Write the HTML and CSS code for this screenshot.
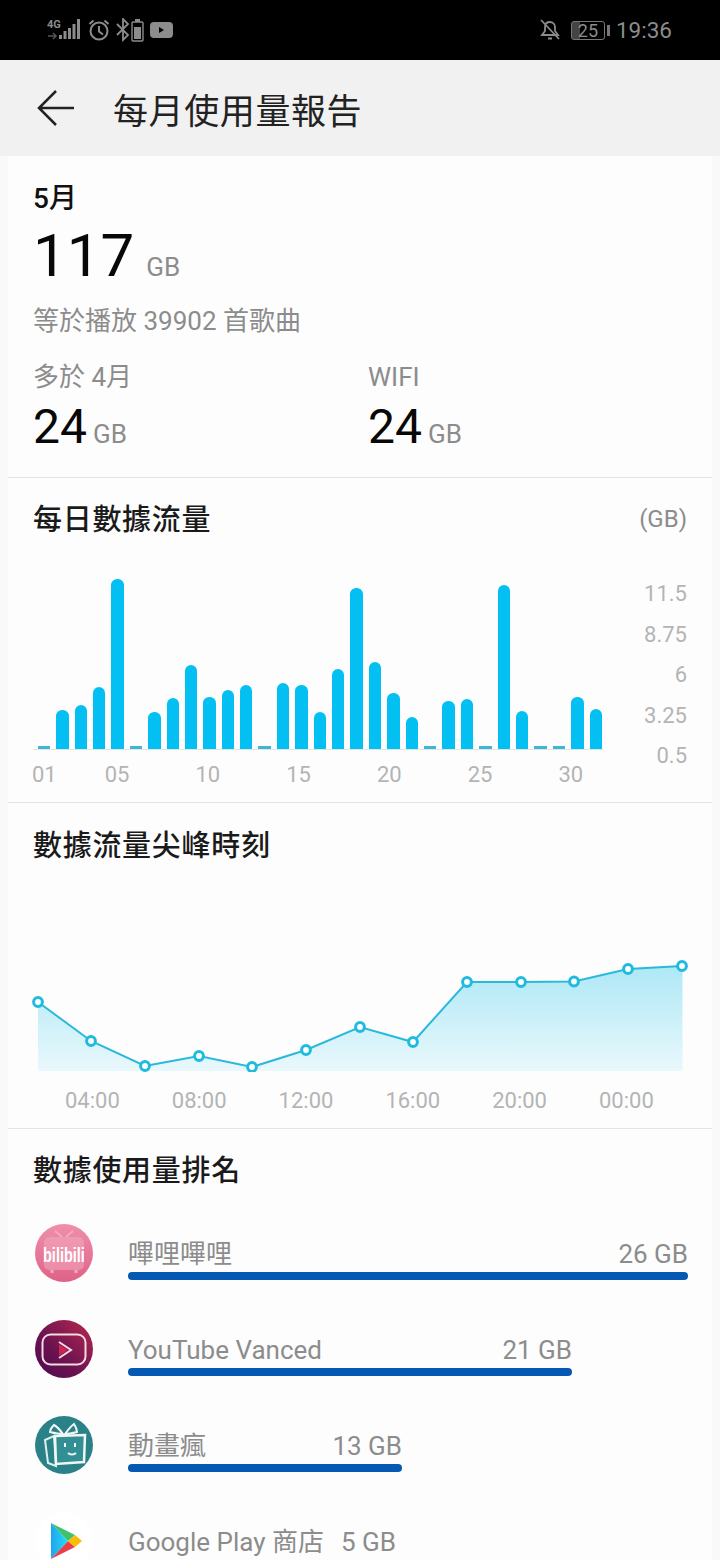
FILE: index.html
```html
<!DOCTYPE html>
<html lang="zh-Hant">
<head>
<meta charset="utf-8">
<title>每月使用量報告</title>
<link rel="stylesheet" href="styles.css">
</head>
<body>
<div class="phone">
  <header class="status">
    <div class="status-left">
      <svg class="ic-net" width="36" height="22" viewBox="0 0 36 22">
        <text x="1" y="9" class="net-t">4G</text>
        <path d="M2 17h8M7 14l3 3-3 3" class="net-a"/>
        <rect x="13" y="16" width="3" height="4" fill="#8c8c8c"/>
        <rect x="17.500" y="12" width="3" height="8" fill="#8c8c8c"/>
        <rect x="22" y="9" width="3" height="11" fill="#8c8c8c"/>
        <rect x="26.500" y="5" width="3" height="15" fill="#8c8c8c"/>
        <rect x="31" y="0" width="3" height="20" fill="#8c8c8c"/>
      </svg>
      <svg width="22" height="22" viewBox="0 0 22 22" fill="none" stroke="#8c8c8c" stroke-width="2">
        <circle cx="11" cy="12" r="8.500"/>
        <path d="M11 7v5.500l4 3M1.500 5l4-3.500M20.500 5l-4-3.500"/>
      </svg>
      <svg width="28" height="24" viewBox="0 0 28 24" fill="none" stroke="#8c8c8c" stroke-width="1.800">
        <path d="M1 6l11 11-5 5V1l5 5L1 17"/>
        <rect x="16" y="4" width="11" height="19" rx="1" stroke-width="1.400"/>
        <rect x="18" y="9" width="7" height="12" fill="#8c8c8c" stroke="none"/>
        <rect x="19" y="1" width="5" height="3" fill="#8c8c8c" stroke="none"/>
      </svg>
      <svg width="23" height="16" viewBox="0 0 23 16">
        <rect width="23" height="16" rx="4" fill="#8c8c8c"/>
        <path d="M9 5l5 3-5 3z" fill="#000"/>
      </svg>
    </div>
    <div class="status-right">
      <svg class="bell" width="20" height="22" viewBox="0 0 20 22" fill="none" stroke="#8c8c8c" stroke-width="1.800">
        <path d="M1 1l18 19M5 8c0-3 2-5 5-5 2.500 0 5 2 5 5v4l3 4H2l3-4zM8 19.500h4"/>
      </svg>
      <div class="battery">
        <span class="batt-box"><span class="batt-num">25</span></span>
        <span class="batt-cap"></span>
      </div>
      <span class="clock">19:36</span>
    </div>
  </header>

  <div class="appbar">
    <svg width="40" height="38" viewBox="0 0 40 38" fill="none" stroke="#222" stroke-width="2.500">
      <path d="M38 19H3M20 2L3 19l17 17"/>
    </svg>
    <h1 class="app-title">每月使用量報告</h1>
  </div>

  <main class="card">
    <section class="summary">
      <div class="month">5月</div>
      <div class="total"><span class="total-num">117</span><span class="total-unit">GB</span></div>
      <div class="note">等於播放 39902 首歌曲</div>
      <div class="stats">
        <div class="stat">
          <div class="stat-label">多於 4月</div>
          <div class="stat-value"><span class="stat-num">24</span><span class="stat-unit">GB</span></div>
        </div>
        <div class="stat">
          <div class="stat-label">WIFI</div>
          <div class="stat-value"><span class="stat-num">24</span><span class="stat-unit">GB</span></div>
        </div>
      </div>
    </section>

    <section class="daily">
      <div class="head-row">
        <h2 class="sec-title">每日數據流量</h2>
        <span class="gb-note">(GB)</span>
      </div>
      <div class="bars-wrap">
        <div class="bars-col">
          <div class="bars">
            <i class="bar stub"></i>
            <i class="bar" style="height:39px"></i>
            <i class="bar" style="height:44px"></i>
            <i class="bar" style="height:62px"></i>
            <i class="bar" style="height:170px"></i>
            <i class="bar stub"></i>
            <i class="bar" style="height:37px"></i>
            <i class="bar" style="height:51px"></i>
            <i class="bar" style="height:84px"></i>
            <i class="bar" style="height:52px"></i>
            <i class="bar" style="height:59px"></i>
            <i class="bar" style="height:64px"></i>
            <i class="bar stub"></i>
            <i class="bar" style="height:66px"></i>
            <i class="bar" style="height:64px"></i>
            <i class="bar" style="height:37px"></i>
            <i class="bar" style="height:80px"></i>
            <i class="bar" style="height:161px"></i>
            <i class="bar" style="height:87px"></i>
            <i class="bar" style="height:56px"></i>
            <i class="bar" style="height:32px"></i>
            <i class="bar stub"></i>
            <i class="bar" style="height:48px"></i>
            <i class="bar" style="height:50px"></i>
            <i class="bar stub"></i>
            <i class="bar" style="height:164px"></i>
            <i class="bar" style="height:38px"></i>
            <i class="bar stub"></i>
            <i class="bar stub"></i>
            <i class="bar" style="height:52px"></i>
            <i class="bar" style="height:40px"></i>
          </div>
          <div class="bar-days">
            <span>01</span><span>05</span><span>10</span><span>15</span><span>20</span><span>25</span><span>30</span>
          </div>
        </div>
        <div class="y-axis">
          <span>11.5</span><span>8.75</span><span>6</span><span>3.25</span><span>0.5</span>
        </div>
      </div>
    </section>

    <section class="peak">
      <h2 class="sec-title">數據流量尖峰時刻</h2>
      <svg class="line-chart" width="704" height="209" viewBox="0 0 704 209">
        <defs>
          <linearGradient id="area" x1="0" y1="0" x2="0" y2="1">
            <stop offset="0" stop-color="#aee8f6"/>
            <stop offset="1" stop-color="#e9f8fc"/>
          </linearGradient>
        </defs>
        <path fill="url(#area)" d="M30 139L83 178L137 203L191 193L244 204L298 187L352 164L405 179L459 119L513 119L566 118.500L620 106L674.500 103V208H30Z"/>
        <polyline class="line" points="30,139 83,178 137,203 191,193 244,204 298,187 352,164 405,179 459,119 513,119 566,118.500 620,106 674,103"/>
        <g class="dots">
          <circle cx="30" cy="139" r="4.400"/><circle cx="83" cy="178" r="4.400"/><circle cx="137" cy="203" r="4.400"/><circle cx="191" cy="193" r="4.400"/><circle cx="244" cy="204" r="4.400"/><circle cx="298" cy="187" r="4.400"/><circle cx="352" cy="164" r="4.400"/><circle cx="405" cy="179" r="4.400"/><circle cx="459" cy="119" r="4.400"/><circle cx="513" cy="119" r="4.400"/><circle cx="566" cy="118.500" r="4.400"/><circle cx="620" cy="106" r="4.400"/><circle cx="674" cy="103" r="4.400"/>
        </g>
      </svg>
      <div class="hours">
        <span>04:00</span><span>08:00</span><span>12:00</span><span>16:00</span><span>20:00</span><span>00:00</span>
      </div>
    </section>

    <section class="rank">
      <h2 class="sec-title">數據使用量排名</h2>
      <div class="rows">
        <div class="row">
          <svg class="app-icon" viewBox="0 0 58 58">
            <defs>
              <linearGradient id="bl" x1="0" y1="0" x2="0" y2="1">
                <stop offset="0" stop-color="#ef8fac"/>
                <stop offset="1" stop-color="#df6288"/>
              </linearGradient>
            </defs>
            <circle cx="29" cy="29" r="29" fill="url(#bl)"/>
            <path d="M20 7l7 6M38 7l-7 6" stroke="#f3a9c0" stroke-width="2" fill="none"/>
            <rect x="9" y="13" width="40" height="33" rx="5" fill="#f3a9c0" fill-opacity=".55"/>
            <path d="M17 46v3M41 46v3" stroke="#f3a9c0" stroke-width="3"/>
            <text class="bili-t" transform="translate(8 38) scale(1 1.380)">bilibili</text>
          </svg>
          <div class="usage" style="width:560px">
            <div class="usage-text"><span>嗶哩嗶哩</span><span>26 GB</span></div>
            <div class="usage-bar"></div>
          </div>
        </div>
        <div class="row">
          <svg class="app-icon" viewBox="0 0 58 58">
            <defs>
              <linearGradient id="yt" x1="1" y1="0" x2="0" y2="1">
                <stop offset="0" stop-color="#b8294f"/>
                <stop offset=".6" stop-color="#6a1250"/>
                <stop offset="1" stop-color="#4d0a4d"/>
              </linearGradient>
            </defs>
            <circle cx="29" cy="29" r="29" fill="url(#yt)"/>
            <rect x="7.500" y="14.500" width="43" height="30" rx="8" fill="none" stroke="#f4dbe4" stroke-width="2"/>
            <path d="M24 22l12 8-12 8" fill="none" stroke="#f7dbe4" stroke-width="2"/>
            <path d="M24 24l9 6-9 6z" fill="#c8264f"/>
          </svg>
          <div class="usage" style="width:444px">
            <div class="usage-text"><span>YouTube Vanced</span><span>21 GB</span></div>
            <div class="usage-bar"></div>
          </div>
        </div>
        <div class="row">
          <svg class="app-icon" viewBox="0 0 58 58">
            <circle cx="29" cy="29" r="29" fill="#2a8288"/>
            <path d="M28 18c-3-4-7-8-9-9-2 2-4 5-4 7 4 1 9 2 13 2zM30 18c3-4 6-8 9-10 2 3 3 5 3 8-4 1-8 2-12 2z" fill="none" stroke="#f1f6f6" stroke-width="2"/>
            <path d="M10 24l9-4 2 30-8-3z" fill="none" stroke="#dfeeee" stroke-width="2"/>
            <path d="M20 20l30-1-1 27-28 2z" fill="#328f93" stroke="#f1f6f6" stroke-width="2.500"/>
            <path d="M30 27v4M40 27v4M33 37c2 2 6 2 8 0" fill="none" stroke="#f1f6f6" stroke-width="2"/>
          </svg>
          <div class="usage" style="width:274px">
            <div class="usage-text"><span>動畫瘋</span><span>13 GB</span></div>
            <div class="usage-bar"></div>
          </div>
        </div>
        <div class="row">
          <svg class="app-icon" viewBox="0 0 58 58">
            <defs>
              <linearGradient id="gp" x1="0" y1="0" x2="1" y2="0">
                <stop offset="0" stop-color="#1fa5ee"/>
                <stop offset="1" stop-color="#27dcf5"/>
              </linearGradient>
            </defs>
            <circle cx="29" cy="29" r="29" fill="#fff"/>
            <path d="M16 11v36l17-18z" fill="url(#gp)"/>
            <path d="M16 11l17 18 7-6z" fill="#3fc26b"/>
            <path d="M16 47l17-18 7 6z" fill="#e8404a"/>
            <path d="M33 29l7-6 7 6-7 6z" fill="#fbbc05"/>
          </svg>
          <div class="usage" style="width:117px">
            <div class="usage-text wide"><span>Google Play 商店</span><span>5 GB</span></div>
            <div class="usage-bar"></div>
          </div>
        </div>
      </div>
    </section>
  </main>
</div>
</body>
</html>
```

FILE: styles.css
```css
* { box-sizing: border-box; }
html, body { margin: 0; padding: 0; }
body {
  width: 720px;
  height: 1560px;
  overflow: hidden;
  background: #f9f9f9;
  font-family: Roboto, "Noto Sans CJK TC", sans-serif;
}
.phone { width: 720px; height: 1560px; overflow: hidden; }

.status {
  height: 60px;
  background: #000;
  display: flex;
  justify-content: space-between;
  align-items: center;
  padding: 0 48px 0 46px;
  color: #8c8c8c;
}
.status-left { display: flex; align-items: center; gap: 6px; }
.status-right { display: flex; align-items: center; gap: 6px; }
.bell { margin-right: 5px; }
.net-t { font: 700 11px "Roboto", sans-serif; fill: #8c8c8c; }
.net-a { stroke: #555; stroke-width: 1.5; fill: none; }
.battery { display: flex; align-items: center; gap: 2px; }
.batt-box {
  width: 34px;
  height: 19px;
  border: 1.5px solid #777;
  border-radius: 3px;
  display: flex;
  align-items: center;
  justify-content: center;
  overflow: hidden;
  background: linear-gradient(90deg, #444 0 26%, #000 26%);
}
.batt-num { font-size: 18px; color: #8c8c8c; }
.batt-cap { width: 3px; height: 11px; background: #777; }
.clock { font-size: 22.500px; }

.appbar {
  height: 96px;
  background: #f1f1f1;
  display: flex;
  align-items: center;
  padding-left: 36px;
  gap: 37px;
}
.app-title {
  margin: 0;
  font-size: 35px;
  font-weight: 400;
  letter-spacing: .6px;
  color: #222;
}

.card {
  margin: 0 8px;
  background: #fdfdfd;
}
.summary {
  height: 322px;
  padding: 26px 25px 0;
  border-bottom: 1px solid #e4e4e4;
}
.month { font-size: 28px; line-height: 34px; color: #111; font-weight: 500; }
.total { display: flex; align-items: baseline; height: 70px; margin-top: 5px; }
.total-num { font-size: 60px; line-height: 70px; color: #080808; }
.total-unit { font-size: 26px; color: #8c8c8c; margin-left: 12px; }
.note { font-size: 26px; line-height: 34px; color: #8c8c8c; margin-top: 13px; }
.stats { display: flex; margin-top: 22px; }
.stat { flex: 0 0 335px; }
.stat-label { font-size: 26px; line-height: 34px; color: #8c8c8c; }
.stat-value { display: flex; align-items: baseline; height: 56px; margin-top: 5px; }
.stat-num { font-size: 48px; line-height: 56px; color: #080808; }
.stat-unit { font-size: 26px; color: #8c8c8c; margin-left: 6px; }

.daily {
  height: 325px;
  padding: 24px 25px 0;
  border-bottom: 1px solid #e4e4e4;
}
.head-row { display: flex; justify-content: space-between; align-items: center; }
.sec-title { margin: 0; font-size: 29px; line-height: 36px; font-weight: 500; color: #1a1a1a; letter-spacing: .7px; }
.gb-note { font-size: 24px; color: #8c8c8c; margin-bottom: 2px; }
.bars-wrap { display: flex; justify-content: space-between; margin-top: 23px; }
.bars-col { width: 570px; }
.bars {
  height: 189px;
  width: 570px;
  display: flex;
  align-items: flex-end;
  gap: 6px;
  padding-left: 4.800px;
  border-bottom: 1px solid #e3e3e3;
}
.bar {
  display: block;
  flex: 0 0 12.400px;
  background: #04c0f2;
  border-radius: 6.200px 6.200px 0 0;
}
.bar.stub { height: 3px; border-radius: 0; background: #3fb6d6; }
.bar-days { display: flex; height: 30px; margin: 10px 0 0 -1px; font-size: 22px; line-height: 30px; color: #b4b4b4; }
.bar-days span:nth-child(2) { margin-left: 48px; }
.bar-days span:nth-child(n+3) { margin-left: 66px; }
.y-axis {
  display: flex;
  flex-direction: column;
  align-items: flex-end;
  gap: 10.500px;
  font-size: 22px;
  line-height: 30px;
  color: #b4b4b4;
  padding-top: 18px;
}

.peak {
  height: 326px;
  padding: 25px 0 0;
  border-bottom: 1px solid #e4e4e4;
}
.peak .sec-title { padding-left: 25px; }
.line-chart { display: block; margin-top: -1px; }
.line { fill: none; stroke: #29b9dc; stroke-width: 2; }
.dots circle { fill: #fff; stroke: #1ebbdf; stroke-width: 3; }
.hours {
  display: flex;
  font-size: 22px;
  line-height: 30px;
  color: #b4b4b4;
  padding-left: 57px;
  gap: 52px;
  margin-top: 14px;
}

.rank { padding: 24px 0 0 27px; }
.rank .sec-title { margin-left: -2px; }
.rows { display: flex; flex-direction: column; gap: 38px; margin-top: 35px; }
.row { display: flex; height: 58px; gap: 35px; }
.app-icon { flex: 0 0 58px; width: 58px; height: 58px; }
.bili-t { font: 700 14.500px "Liberation Sans", sans-serif; fill: #fff; }
.usage { display: flex; flex-direction: column; justify-content: flex-end; height: 56px; }
.usage-text {
  display: flex;
  justify-content: space-between;
  font-size: 26px;
  line-height: 34px;
  color: #8c8c8c;
  white-space: nowrap;
}
.usage-text.wide { width: 268px; flex: none; }
.usage-bar { flex: none; height: 8px; border-radius: 4px; background: #0559b3; margin-top: 1px; }
```
